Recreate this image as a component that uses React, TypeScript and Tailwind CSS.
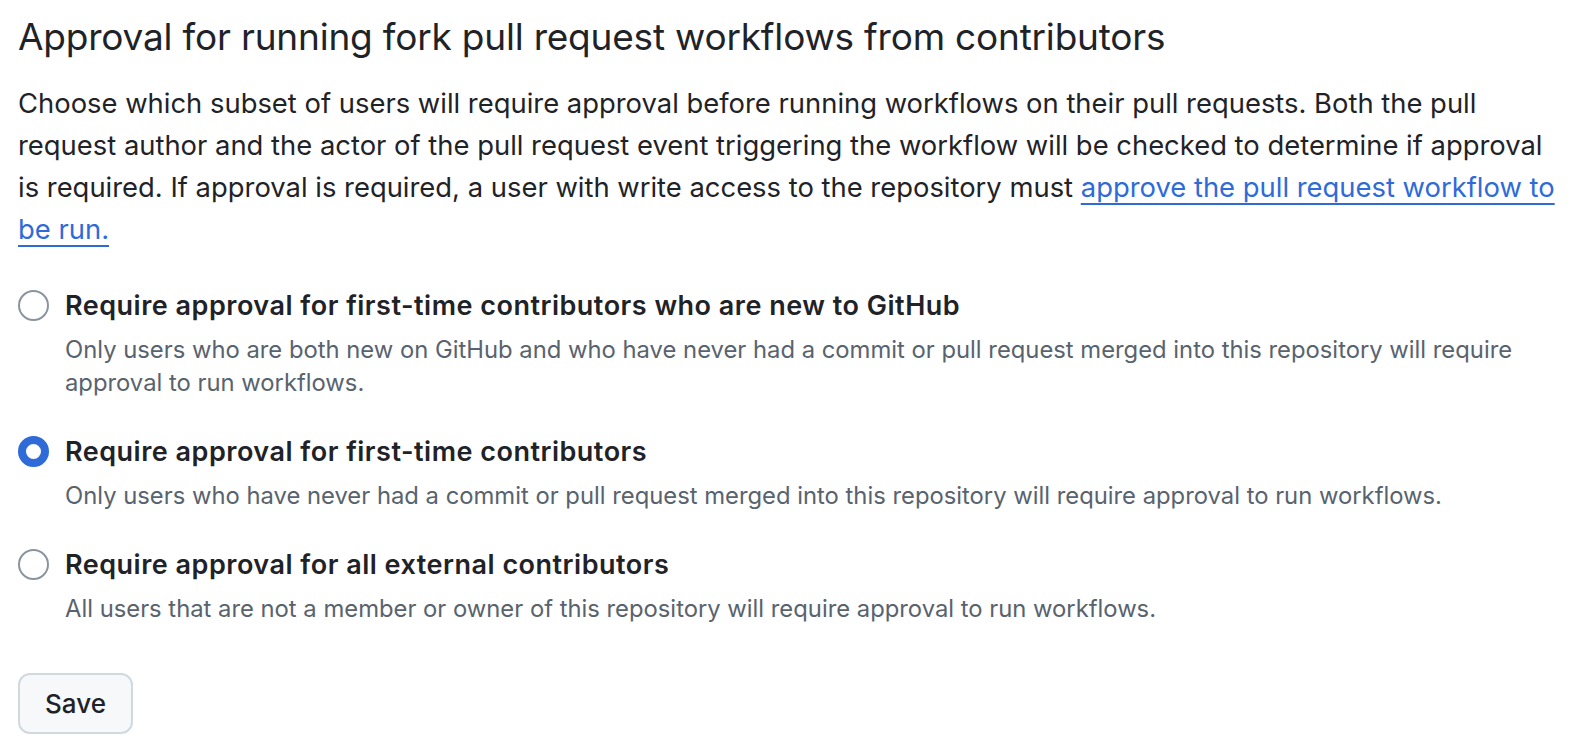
import React from "react";

const options = [
  {
    label: "Require approval for first-time contributors who are new to GitHub",
    note: "Only users who are both new on GitHub and who have never had a commit or pull request merged into this repository will require approval to run workflows.",
    checked: false,
  },
  {
    label: "Require approval for first-time contributors",
    note: "Only users who have never had a commit or pull request merged into this repository will require approval to run workflows.",
    checked: true,
  },
  {
    label: "Require approval for all external contributors",
    note: "All users that are not a member or owner of this repository will require approval to run workflows.",
    checked: false,
  },
];

export default function App() {
  return (
    <div
      className="bg-white min-h-[744px] px-[18px] pt-[12px] text-[#1f2328]"
      style={{ fontFamily: "Inter, 'Noto Sans', sans-serif" }}
    >
      <h2 className="text-[37px] leading-[50px] font-normal tracking-[-0.2px]">
        Approval for running fork pull request workflows from contributors
      </h2>
      <p className="mt-[20px] text-[27.4px] leading-[42px] -mr-[10px]">
        Choose which subset of users will require approval before running workflows on their pull requests. Both the pull
        <br />
        request author and the actor of the pull request event triggering the workflow will be checked to determine if approval
        <br />
        is required. If approval is required, a user with write access to the repository must{" "}
        <a href="#" className="text-[#2e6bd8] underline underline-offset-[6px] decoration-[2px]">
          approve the pull request workflow to
          <br />
          be run.
        </a>
      </p>
      <div className="mt-[40px] flex flex-col gap-[37px]">
        {options.map((o) => (
          <label key={o.label} className="flex items-start gap-[16px]">
            <span className="flex h-[31px] w-[31px] shrink-0 items-center justify-center">
              {o.checked ? (
                <span className="block h-[31px] w-[31px] rounded-full border-[8px] border-[#2e6bd8] bg-white" />
              ) : (
                <span className="block h-[31px] w-[31px] rounded-full border-[2px] border-[#8b949e] bg-white" />
              )}
            </span>
            <span className="flex flex-col">
              <span className="text-[27px] leading-[31px] font-semibold tracking-[0.5px]">{o.label}</span>
              <span className="mt-[12px] text-[23.8px] leading-[33px] text-[#59636e] pr-[40px]">{o.note}</span>
            </span>
          </label>
        ))}
      </div>
      <button className="mt-[48px] h-[61px] w-[115px] rounded-[12px] border-[2px] border-[#d1d9e0] bg-[#f6f8fa] text-[26px] font-medium text-[#1f2328]">
        Save
      </button>
    </div>
  );
}
